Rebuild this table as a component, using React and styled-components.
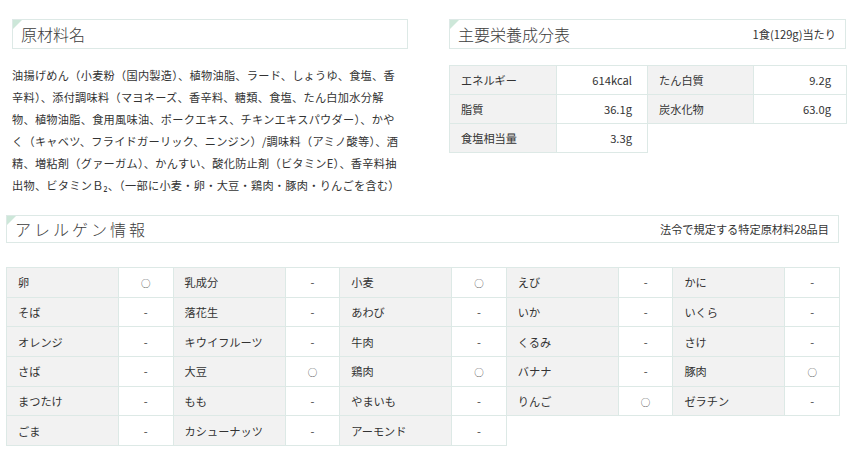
import React from "react";
import styled, { createGlobalStyle } from "styled-components";

const Global = createGlobalStyle`
  html, body { margin: 0; padding: 0; background: #fff; }
  body {
    font-family: "Noto Sans CJK JP", "Noto Sans", sans-serif;
    color: #333;
    font-size: 11.2px;
  }
`;

const Page = styled.div`
  width: 860px;
  height: 454px;
  overflow: hidden;
  box-sizing: border-box;
  padding-top: 19px;
`;

const TopRow = styled.div`
  display: flex;
  gap: 41px;
  padding-left: 12px;
`;

const Column = styled.div`
  width: ${(p) => p.$w}px;
  flex: none;
`;

const Header = styled.div`
  position: relative;
  box-sizing: border-box;
  height: ${(p) => p.$h || 30}px;
  border: 1px solid #dde9e6;
  display: flex;
  align-items: center;
  justify-content: space-between;
  padding: 0 9px 0 8px;
  background: #fff;
  &::before {
    content: "";
    position: absolute;
    left: 0;
    top: 0;
    border-top: 9px solid #cde7d9;
    border-right: 9px solid transparent;
  }
`;

const Title = styled.h2`
  margin: 0;
  font-weight: 300;
  font-size: 16px;
  color: #3c3c3c;
  letter-spacing: ${(p) => p.$ls || 0}px;
  font-family: "Noto Sans CJK JP", sans-serif;
`;

const Note = styled.span`
  font-size: 11.2px;
  color: #333;
`;

const Ingredients = styled.p`
  margin: 15px 0 0;
  font-size: 11.2px;
  line-height: 22px;
  letter-spacing: 0.26px;
  white-space: nowrap;
  color: #333;
`;

const NutTable = styled.table`
  margin-top: 16px;
  border-collapse: collapse;
  table-layout: fixed;
  width: 397px;
`;

const Cell = styled.td`
  box-sizing: border-box;
  height: ${(p) => p.$h}px;
  border: 1px solid #dde9e6;
  background: ${(p) => (p.$label ? "#f2f2f2" : "#fff")};
  padding: 0 ${(p) => (p.$right ? 15 : 0)}px 0 ${(p) => (p.$label ? 11 : 0)}px;
  text-align: ${(p) => (p.$right ? "right" : p.$center ? "center" : "left")};
  font-size: 11.2px;
  color: #333;
  white-space: nowrap;
`;

const Mark = styled.span`
  font-size: ${(p) => (p.$circle ? "9.5px" : "11.2px")};
  color: #444;
`;

const AllergySection = styled.section`
  margin: 19px 0 0 6px;
  width: 833px;
`;

const AllergyTable = styled.table`
  margin-top: 24px;
  border-collapse: collapse;
  table-layout: fixed;
  width: 833px;
`;

const nutrition = [
  [["エネルギー", "614kcal"], ["たん白質", "9.2g"]],
  [["脂質", "36.1g"], ["炭水化物", "63.0g"]],
  [["食塩相当量", "3.3g"]],
];

const allergens = [
  [["卵", true], ["乳成分", false], ["小麦", true], ["えび", false], ["かに", false]],
  [["そば", false], ["落花生", false], ["あわび", false], ["いか", false], ["いくら", false]],
  [["オレンジ", false], ["キウイフルーツ", false], ["牛肉", false], ["くるみ", false], ["さけ", false]],
  [["さば", false], ["大豆", true], ["鶏肉", true], ["バナナ", false], ["豚肉", true]],
  [["まつたけ", false], ["もも", false], ["やまいも", false], ["りんご", true], ["ゼラチン", false]],
  [["ごま", false], ["カシューナッツ", false], ["アーモンド", false]],
];

const ingredientLines = [
  "油揚げめん（小麦粉（国内製造）、植物油脂、ラード、しょうゆ、食塩、香",
  "辛料）、添付調味料（マヨネーズ、香辛料、糖類、食塩、たん白加水分解",
  "物、植物油脂、食用風味油、ポークエキス、チキンエキスパウダー）、かや",
  "く（キャベツ、フライドガーリック、ニンジン）/調味料（アミノ酸等）、酒",
  "精、増粘剤（グァーガム）、かんすい、酸化防止剤（ビタミンE）、香辛料抽",
  "出物、ビタミンＢ₂、（一部に小麦・卵・大豆・鶏肉・豚肉・りんごを含む）",
];

export default function App() {
  return (
    <Page>
      <Global />
      <TopRow>
        <Column $w={396}>
          <Header>
            <Title>原材料名</Title>
          </Header>
          <Ingredients>
            {ingredientLines.map((l, i) => (
              <React.Fragment key={i}>
                {l}
                {i < ingredientLines.length - 1 && <br />}
              </React.Fragment>
            ))}
          </Ingredients>
        </Column>
        <Column $w={397}>
          <Header>
            <Title>主要栄養成分表</Title>
            <Note>1食(129g)当たり</Note>
          </Header>
          <NutTable>
            <colgroup>
              <col style={{ width: 107 }} />
              <col style={{ width: 91 }} />
              <col style={{ width: 106 }} />
              <col style={{ width: 93 }} />
            </colgroup>
            <tbody>
              {nutrition.map((row, i) => (
                <tr key={i}>
                  {row.map(([k, v]) => (
                    <React.Fragment key={k}>
                      <Cell $h={29} $label>{k}</Cell>
                      <Cell $h={29} $right>{v}</Cell>
                    </React.Fragment>
                  ))}
                </tr>
              ))}
            </tbody>
          </NutTable>
        </Column>
      </TopRow>
      <AllergySection>
        <Header $h={28}>
          <Title $ls={3}>アレルゲン情報</Title>
          <Note>法令で規定する特定原材料28品目</Note>
        </Header>
        <AllergyTable>
          <colgroup>
            {Array.from({ length: 5 }).map((_, i) => (
              <React.Fragment key={i}>
                <col style={{ width: 112 }} />
                <col style={{ width: 54.6 }} />
              </React.Fragment>
            ))}
          </colgroup>
          <tbody>
            {allergens.map((row, i) => (
              <tr key={i}>
                {row.map(([k, has]) => (
                  <React.Fragment key={k}>
                    <Cell $h={29.7} $label>{k}</Cell>
                    <Cell $h={29.7} $center>
                      <Mark $circle={has}>{has ? "○" : "-"}</Mark>
                    </Cell>
                  </React.Fragment>
                ))}
              </tr>
            ))}
          </tbody>
        </AllergyTable>
      </AllergySection>
    </Page>
  );
}
